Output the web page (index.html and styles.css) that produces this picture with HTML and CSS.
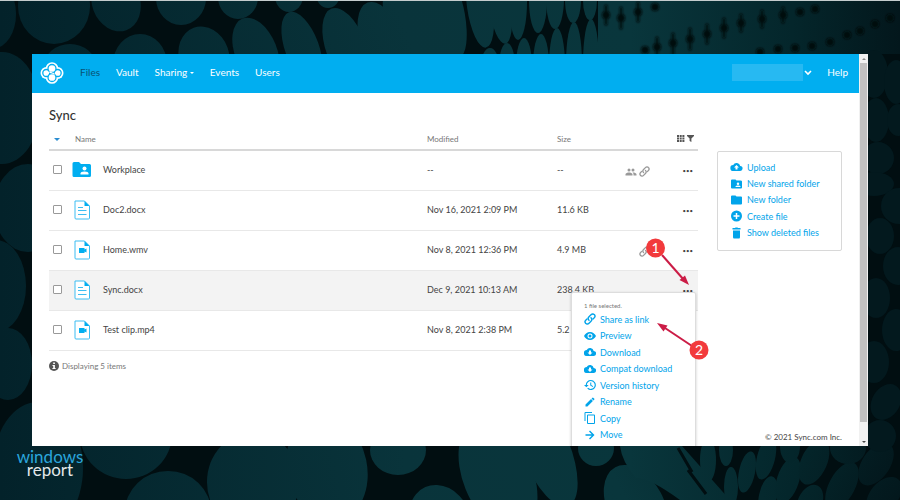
FILE: index.html
```html
<!DOCTYPE html>
<html lang="en">
<head>
	<meta charset="utf-8">
	<title>Files - Sync</title>
	<link rel="stylesheet" href="styles.css">
</head>

<body>
	<svg class="backdrop" viewBox="0 0 900 500" preserveAspectRatio="xMidYMid slice" aria-hidden="true">
		<defs>
			<linearGradient id="teal" gradientUnits="userSpaceOnUse" x1="0" y1="0" x2="900" y2="0">
				<stop offset="0" stop-color="#03222a"/>
				<stop offset=".45" stop-color="#09343b"/>
				<stop offset=".7" stop-color="#09363c"/>
				<stop offset=".88" stop-color="#04262b"/>
				<stop offset="1" stop-color="#03171c"/>
			</linearGradient>
			<filter id="soft"><feGaussianBlur stdDeviation="1.2"/></filter>
		</defs>
		<rect width="900" height="500" fill="#010e11"/>
		<g fill="url(#teal)">
			<!-- top -->
			<ellipse cx="-6" cy="14" rx="22" ry="34"/>
			<ellipse cx="54" cy="6" rx="36" ry="38"/>
			<ellipse cx="70" cy="66" rx="26" ry="22"/>
			<ellipse cx="116" cy="2" rx="24" ry="30" transform="rotate(-20 116 2)"/>
			<ellipse cx="140" cy="64" rx="27" ry="30"/>
			<ellipse cx="181" cy="-2" rx="25" ry="27"/>
			<ellipse cx="204" cy="56" rx="25" ry="30" transform="rotate(-20 204 56)"/>
			<ellipse cx="238" cy="-3" rx="20" ry="22"/>
			<ellipse cx="256" cy="52" rx="21" ry="36" transform="rotate(-22 256 52)"/>
			<ellipse cx="289" cy="-4" rx="14" ry="16"/>
			<ellipse cx="302" cy="48" rx="17" ry="38" transform="rotate(-20 302 48)"/>
			<ellipse cx="328" cy="-6" rx="12" ry="14"/>
			<ellipse cx="346" cy="48" rx="20" ry="42" transform="rotate(-20 346 48)"/>
			<ellipse cx="382" cy="42" rx="21" ry="42" transform="rotate(-20 382 42)"/>
			<ellipse cx="408" cy="26" rx="21" ry="46" transform="rotate(-20 408 26)"/>
			<ellipse cx="435" cy="20" rx="19" ry="48" transform="rotate(-20 435 20)"/>
			<ellipse cx="452" cy="16" rx="13" ry="42" transform="rotate(-10 452 16)"/>
			<ellipse cx="480" cy="6" rx="13" ry="42" transform="rotate(-8 480 6)"/>
			<ellipse cx="500" cy="6" rx="11" ry="38" transform="rotate(-8 500 6)"/>
			<ellipse cx="518" cy="2" rx="9" ry="38"/>
			<ellipse cx="538" cy="0" rx="9" ry="33"/>
			<ellipse cx="555" cy="-2" rx="9" ry="31"/>
			<ellipse cx="573" cy="0" rx="8" ry="23"/>
			<ellipse cx="590" cy="0" rx="7" ry="20"/>
			<ellipse cx="490" cy="66" rx="9" ry="18"/>
			<ellipse cx="507" cy="66" rx="8" ry="23"/>
			<ellipse cx="524" cy="66" rx="8" ry="28"/>
			<ellipse cx="541" cy="66" rx="8" ry="32"/>
			<ellipse cx="557" cy="66" rx="8" ry="38"/>
			<ellipse cx="574" cy="64" rx="8" ry="42"/>
			<ellipse cx="591" cy="64" rx="8" ry="45"/>
			<path d="M598 0H900V54H598Z"/>
			<!-- left edge -->
			<ellipse cx="2" cy="108" rx="38" ry="56"/>
			<ellipse cx="28" cy="208" rx="34" ry="44"/>
			<ellipse cx="-4" cy="286" rx="30" ry="46"/>
			<ellipse cx="8" cy="364" rx="24" ry="36"/>
			<ellipse cx="38" cy="468" rx="45" ry="66"/>
			<!-- bottom -->
			<ellipse cx="126" cy="434" rx="46" ry="45"/>
			<ellipse cx="168" cy="512" rx="43" ry="41"/>
			<ellipse cx="253" cy="482" rx="46" ry="50"/>
			<ellipse cx="327" cy="468" rx="40" ry="54" transform="rotate(-12 327 468)"/>
			<ellipse cx="398" cy="450" rx="28" ry="25"/>
			<ellipse cx="440" cy="520" rx="30" ry="36" transform="rotate(-24 440 520)"/>
			<ellipse cx="498" cy="476" rx="35" ry="60" transform="rotate(-22 498 476)"/>
			<ellipse cx="546" cy="450" rx="24" ry="60" transform="rotate(-22 546 450)"/>
			<ellipse cx="596" cy="448" rx="18" ry="18"/>
			<ellipse cx="600" cy="522" rx="18" ry="16"/>
			<ellipse cx="636" cy="506" rx="28" ry="44" transform="rotate(-28 636 506)"/>
			<path d="M620 446H682L730 500H680Q650 478 636 478Q622 462 620 446Z"/>
			<!-- bottom right -->
			<ellipse cx="708" cy="460" rx="8" ry="22"/>
			<ellipse cx="726" cy="450" rx="7" ry="16"/>
			<ellipse cx="731" cy="487" rx="7" ry="20"/>
			<ellipse cx="747" cy="472" rx="8" ry="21" transform="rotate(12 747 472)"/>
			<ellipse cx="766" cy="458" rx="9" ry="22" transform="rotate(14 766 458)"/>
			<ellipse cx="768" cy="496" rx="9" ry="20" transform="rotate(12 768 496)"/>
			<ellipse cx="788" cy="480" rx="11" ry="24" transform="rotate(18 788 480)"/>
			<ellipse cx="790" cy="446" rx="10" ry="17"/>
			<ellipse cx="814" cy="462" rx="13" ry="24" transform="rotate(24 814 462)"/>
			<ellipse cx="810" cy="502" rx="12" ry="18" transform="rotate(24 810 502)"/>
			<ellipse cx="842" cy="486" rx="13" ry="26" transform="rotate(28 842 486)"/>
			<ellipse cx="848" cy="448" rx="18" ry="16"/>
			<ellipse cx="876" cy="464" rx="14" ry="24" transform="rotate(34 876 464)"/>
			<ellipse cx="884" cy="496" rx="14" ry="22" transform="rotate(40 884 496)"/>
		</g>
		<!-- right edge -->
		<g fill="#03191e">
			<ellipse cx="874" cy="74" rx="14" ry="24"/>
			<ellipse cx="896" cy="82" rx="12" ry="22"/>
			<ellipse cx="876" cy="120" rx="13" ry="22"/>
			<ellipse cx="898" cy="120" rx="11" ry="16"/>
			<ellipse cx="878" cy="158" rx="16" ry="16"/>
			<ellipse cx="874" cy="184" rx="20" ry="12"/>
			<ellipse cx="899" cy="206" rx="18" ry="18"/>
			<ellipse cx="880" cy="236" rx="14" ry="18"/>
			<ellipse cx="898" cy="266" rx="15" ry="19"/>
			<ellipse cx="876" cy="298" rx="14" ry="20"/>
			<ellipse cx="896" cy="330" rx="14" ry="21"/>
			<ellipse cx="874" cy="362" rx="15" ry="21"/>
			<ellipse cx="886" cy="402" rx="14" ry="19" transform="rotate(30 886 402)"/>
			<ellipse cx="880" cy="436" rx="16" ry="16"/>
		</g>
		<!-- gaps between the packed shapes -->
		<g fill="none" stroke="#010e11" stroke-linecap="round" filter="url(#soft)">
			<path d="M606 15h.1M621 18h.1M638 12h.1M655 7h.1M645 50h.1M657 47h.1M673 43h.1M690 39h.1M707 34h.1M724 28h.1M741 23h.1M762 19h.1M783 15h.1M800 12h.1M815 9h.1" stroke-width="8"/>
			<path d="M606 6v18M621 8v20M638 3v18M657 38v16M673 34v20M690 29v20M707 25v18M724 19v18M741 15v16M762 11v16M783 8v14" stroke-width="3"/>
			<path d="M760 52h.1M778 49h.1M795 48h.1M812 46h.1M830 42h.1M847 35h.1M860 31h.1M875 24h.1M890 18h.1" stroke-width="8"/>
		</g>
		<path d="M678 448l14 24M688 470l18 24" stroke="#010e11" stroke-width="3" fill="none"/>
	</svg>

	<div class="window">
		<div class="app">
			<header class="topbar">
				<a href="#" class="logo" aria-label="Sync home">
					<svg width="24" height="22" viewBox="0 0 24 22">
						<g fill="#fff">
							<circle cx="12" cy="6.500" r="6.300"/>
							<circle cx="6.400" cy="11" r="5.900"/>
							<circle cx="17.600" cy="11" r="5.900"/>
							<circle cx="12" cy="15.500" r="6.300"/>
						</g>
						<g fill="#fff" stroke="#01aef0" stroke-width="1.300">
							<circle cx="6.300" cy="11" r="3.500"/>
							<circle cx="17.700" cy="11" r="3.500"/>
							<circle cx="12" cy="6.500" r="4"/>
							<circle cx="12" cy="15.500" r="4"/>
						</g>
						<path d="M9.500 9.600c1 1.600 4 1.200 5 2.800" fill="none" stroke="#fff" stroke-width="1.300"/>
					</svg>
				</a>
				<nav class="nav">
					<a href="#" class="nav-link active">Files</a>
					<a href="#" class="nav-link">Vault</a>
					<a href="#" class="nav-link">Sharing <span class="caret"></span></a>
					<a href="#" class="nav-link">Events</a>
					<a href="#" class="nav-link">Users</a>
				</nav>
				<button type="button" class="account" aria-label="Account">
					<span class="account-name"></span>
					<svg width="8" height="6" viewBox="0 0 8 6"><path d="M1 1 4 4 7 1" fill="none" stroke="#fff" stroke-width="1.600"/></svg>
				</button>
				<a href="#" class="nav-link">Help</a>
			</header>

			<main class="main">
				<section class="files">
					<h1 class="title">Sync</h1>
					<table class="list">
						<colgroup>
							<col class="w-check">
							<col class="w-icon">
							<col>
							<col class="w-modified">
							<col class="w-size">
							<col class="w-share">
							<col class="w-more">
						</colgroup>
						<thead>
							<tr>
								<th class="col-check"><button type="button" class="sort" aria-label="Sort"><span class="caret caret-blue"></span></button></th>
								<th class="col-name" colspan="2">Name</th>
								<th class="col-modified">Modified</th>
								<th class="col-size">Size</th>
								<th class="col-tools" colspan="2">
									<div class="tools">
										<button type="button" aria-label="Grid view">
											<svg width="8" height="7" viewBox="0 0 8 7"><path d="M0 0h2v2H0zM2.700 0h2v2h-2zM5.400 0h2v2h-2zM0 2.500h2v2H0zM2.700 2.500h2v2h-2zM5.400 2.500h2v2h-2zM0 5h2v2H0zM2.700 5h2v2h-2zM5.400 5h2v2h-2z" fill="#555"/></svg>
										</button>
										<button type="button" aria-label="Filter">
											<svg width="7" height="7" viewBox="0 0 7 7"><path d="M0 0h7v1L4.400 3.500V7L2.600 6V3.500L0 1z" fill="#555"/></svg>
										</button>
									</div>
								</th>
							</tr>
						</thead>
						<tbody>
							<tr>
								<td class="col-check"><input type="checkbox" class="check" aria-label="Select Workplace"></td>
								<td class="col-icon"><svg width="20" height="16" viewBox="0 0 20 16"><path d="M2 0h5l2 2h8.500Q19 2 19 3.500v10q0 1.500-1.500 1.500H2Q.500 15 .500 13.500v-12Q.500 0 2 0z" fill="#01aef0"/><circle cx="12.500" cy="6.500" r="2" fill="#fff"/><path d="M8.500 12.500v-1q0-2 4-2t4 2v1z" fill="#fff"/></svg></td>
								<td class="col-file">Workplace</td>
								<td class="col-modified">--</td>
								<td class="col-size">--</td>
								<td class="col-share">
									<div class="shares">
										<svg width="12" height="12" viewBox="0 0 24 24"><path d="M16 11a3 3 0 1 0 0-6 3 3 0 0 0 0 6zm-8 0a3 3 0 1 0 0-6 3 3 0 0 0 0 6zm0 2c-2.300 0-7 1.200-7 3.500V19h14v-2.500C15 14.200 10.300 13 8 13zm8 0c-.3 0-.6 0-1 .1 1.200.8 2 2 2 3.400V19h6v-2.500c0-2.300-4.700-3.500-7-3.500z" fill="#999"/></svg>
										<svg width="11" height="11" viewBox="0 0 24 24"><use href="#chain"/></svg>
									</div>
								</td>
								<td class="col-more"><button type="button" class="more" aria-label="More actions">•••</button></td>
							</tr>
							<tr>
								<td class="col-check"><input type="checkbox" class="check" aria-label="Select Doc2.docx"></td>
								<td class="col-icon"><svg width="20" height="20" viewBox="0 0 20 20"><use href="#doc"/></svg></td>
								<td class="col-file">Doc2.docx</td>
								<td class="col-modified">Nov 16, 2021 2:09 PM</td>
								<td class="col-size">11.6 KB</td>
								<td class="col-share"></td>
								<td class="col-more"><button type="button" class="more" aria-label="More actions">•••</button></td>
							</tr>
							<tr>
								<td class="col-check"><input type="checkbox" class="check" aria-label="Select Home.wmv"></td>
								<td class="col-icon"><svg width="20" height="20" viewBox="0 0 20 20"><use href="#video"/></svg></td>
								<td class="col-file">Home.wmv</td>
								<td class="col-modified">Nov 8, 2021 12:36 PM</td>
								<td class="col-size">4.9 MB</td>
								<td class="col-share"><div class="shares"><svg width="11" height="11" viewBox="0 0 24 24"><use href="#chain"/></svg></div></td>
								<td class="col-more"><button type="button" class="more" aria-label="More actions">•••</button></td>
							</tr>
							<tr class="selected">
								<td class="col-check"><input type="checkbox" class="check" aria-label="Select Sync.docx"></td>
								<td class="col-icon"><svg width="20" height="20" viewBox="0 0 20 20"><use href="#doc"/></svg></td>
								<td class="col-file">Sync.docx</td>
								<td class="col-modified">Dec 9, 2021 10:13 AM</td>
								<td class="col-size">238.4 KB</td>
								<td class="col-share"></td>
								<td class="col-more">
									<button type="button" class="more" aria-label="More actions">•••</button>
									<div class="menu">
										<p class="menu-title">1 file selected.</p>
										<ul class="actions menu-actions">
											<li><button type="button" class="action"><svg width="12" height="12" viewBox="0 0 24 24"><use href="#chain"/></svg>Share as link</button></li>
											<li><button type="button" class="action"><svg width="12" height="12" viewBox="0 0 24 24"><path d="M12 4C6.500 4 2 7.500 0 12c2 4.500 6.500 8 12 8s10-3.500 12-8c-2-4.500-6.500-8-12-8zm0 13a5 5 0 1 1 0-10 5 5 0 0 1 0 10zm0-8a3 3 0 1 0 0 6 3 3 0 0 0 0-6z"/></svg>Preview</button></li>
											<li><button type="button" class="action"><svg width="12" height="12" viewBox="0 0 24 24"><use href="#cloud-down"/></svg>Download</button></li>
											<li><button type="button" class="action"><svg width="12" height="12" viewBox="0 0 24 24"><use href="#cloud-down"/></svg>Compat download</button></li>
											<li><button type="button" class="action"><svg width="12" height="12" viewBox="0 0 24 24"><path d="M13.500 2A10 10 0 0 0 3.500 12H0l4.700 4.700L9.400 12H5.700a7.800 7.800 0 1 1 2.300 5.500L6.500 19A10 10 0 1 0 13.500 2zM12.500 7v6l5 3 1-1.500-4-2.400V7z"/></svg>Version history</button></li>
											<li><button type="button" class="action"><svg width="12" height="12" viewBox="0 0 24 24"><path d="M3 17.200V21h3.800L17.800 9.900l-3.700-3.700zM20.700 7a1 1 0 0 0 0-1.400l-2.300-2.300a1 1 0 0 0-1.400 0l-1.900 1.800 3.800 3.800z"/></svg>Rename</button></li>
											<li><button type="button" class="action"><svg width="12" height="12" viewBox="0 0 24 24"><path d="M16 0H3Q1 0 1 2v16h2V2h13zM20 5H8Q6 5 6 7v15q0 2 2 2h12q2 0 2-2V7q0-2-2-2zm0 17H8V7h12z"/></svg>Copy</button></li>
											<li><button type="button" class="action"><svg width="12" height="12" viewBox="0 0 24 24"><path d="M12 3l-2 2 5.500 5.500H3v3h12.500L10 19l2 2 9-9z"/></svg>Move</button></li>
										</ul>
									</div>
								</td>
							</tr>
							<tr>
								<td class="col-check"><input type="checkbox" class="check" aria-label="Select Test clip.mp4"></td>
								<td class="col-icon"><svg width="20" height="20" viewBox="0 0 20 20"><use href="#video"/></svg></td>
								<td class="col-file">Test clip.mp4</td>
								<td class="col-modified">Nov 8, 2021 2:38 PM</td>
								<td class="col-size">5.2 MB</td>
								<td class="col-share"></td>
								<td class="col-more"><button type="button" class="more" aria-label="More actions">•••</button></td>
							</tr>
						</tbody>
					</table>
					<p class="count">
						<svg width="10" height="10" viewBox="0 0 10 10"><circle cx="5" cy="5" r="5" fill="#555"/><path d="M4.200 1.600h1.700v1.500H4.200zM3.500 4h2.400v3h.7v1H3.400V7h.8V5h-.7z" fill="#fff"/></svg>
						Displaying 5 items
					</p>
				</section>

				<aside class="side">
					<ul class="actions panel">
						<li><button type="button" class="action"><svg width="13" height="12" viewBox="0 0 24 24"><path d="M19.400 10A7.500 7.500 0 0 0 5.400 8 6 6 0 0 0 6 20h13a5 5 0 0 0 .4-10zM14 13v4h-4v-4H7l5-5 5 5z"/></svg>Upload</button></li>
						<li><button type="button" class="action"><svg width="13" height="12" viewBox="0 0 24 24"><path d="M20 5h-8l-2-2H3Q1 3 1 5v14q0 2 2 2h18q2 0 2-2V7q0-2-3-2zm-5 4a2 2 0 1 1 0 5 2 2 0 0 1 0-5zm5 9H10v-1q0-2 5-2t5 2z"/></svg>New shared folder</button></li>
						<li><button type="button" class="action"><svg width="13" height="12" viewBox="0 0 24 24"><path d="M10 3H3Q1 3 1 5v14q0 2 2 2h18q2 0 2-2V7q0-2-2-2h-9z"/></svg>New folder</button></li>
						<li><button type="button" class="action"><svg width="13" height="12" viewBox="0 0 24 24"><path d="M12 1a11 11 0 1 0 0 22 11 11 0 0 0 0-22zm6 12.500h-4.500V18h-3v-4.500H6v-3h4.500V6h3v4.500H18z"/></svg>Create file</button></li>
						<li><button type="button" class="action"><svg width="13" height="12" viewBox="0 0 24 24"><path d="M5 7h14v13q0 3-2 3H7q-2 0-2-3zM4 2h5l1-1h4l1 1h5v3H4z"/></svg>Show deleted files</button></li>
					</ul>
					<p class="copyright">© 2021 Sync.com Inc.</p>
				</aside>
			</main>
		</div>

		<div class="scrollbar">
			<span class="scroll-arrow scroll-up"></span>
			<span class="scroll-thumb"></span>
			<span class="scroll-arrow scroll-down"></span>
		</div>
	</div>

	<div class="brand">
		<span class="brand-top">windows</span>
		<span class="brand-bottom">report</span>
	</div>

	<!-- numbered steps drawn over the window -->
	<svg class="steps" viewBox="0 0 900 500" aria-hidden="true">
		<g stroke="#cb1c46" stroke-width="2">
			<path d="M662 255 684 280"/>
			<path d="M692 346 665 328"/>
		</g>
		<g fill="#cb1c46">
			<path d="M689 285 679.500 280 685 275.500z"/>
			<path d="M657 323 667.500 325.500 663.500 331.500z"/>
		</g>
		<g fill="#f23a3c">
			<circle cx="655.500" cy="248" r="9.500"/>
			<circle cx="699" cy="350" r="9.500"/>
		</g>
		<g class="step-number">
			<text x="655.500" y="253">1</text>
			<text x="699" y="355">2</text>
		</g>
	</svg>

	<svg class="symbols" aria-hidden="true">
		<symbol id="chain" viewBox="0 0 24 24">
			<g fill="none" stroke="currentColor" stroke-width="2.800" stroke-linecap="round">
				<path d="M10 14.500c-2-2-2-5 0-7l4-4c2-2 5-2 6.500-.3 1.800 1.800 1.800 4.600 0 6.500L18 12.200"/>
				<path d="M14 9.500c2 2 2 5 0 7l-4 4c-2 2-5 2-6.500.3-1.800-1.800-1.800-4.600 0-6.500L6 11.800"/>
			</g>
		</symbol>
		<symbol id="cloud-down" viewBox="0 0 24 24">
			<path d="M19.400 10A7.500 7.500 0 0 0 5.400 8 6 6 0 0 0 6 20h13a5 5 0 0 0 .4-10zM17 13l-5 5-5-5h3V9h4v4z"/>
		</symbol>
		<symbol id="doc" viewBox="0 0 20 20">
			<path d="M3 1h9.500L17.500 6V18q0 1-1 1H4q-1 0-1-1z" fill="#fff" stroke="#3cbdf2"/>
			<path d="M12.500 1 17.500 6h-5z" fill="#01aef0"/>
			<path d="M6 7.500h5M6 10.500h8.500M6 14.500h8.500" stroke="#3cbdf2"/>
		</symbol>
		<symbol id="video" viewBox="0 0 20 20">
			<path d="M3 1h9.500L17.500 6V18q0 1-1 1H4q-1 0-1-1z" fill="#fff" stroke="#3cbdf2"/>
			<path d="M12.500 1 17.500 6h-5z" fill="#01aef0"/>
			<path d="M7 8h5.500v1.500L14.500 8.500v4l-2-1V13H7z" fill="#01aef0"/>
		</symbol>
	</svg>
</body>

</html>
```

FILE: styles.css
```css
*{
	box-sizing: border-box;
}

body{
	margin: 0;
	height: 100vh;
	padding: 53px 32px 0 32px;
	display: flex;
	flex-direction: column;
	overflow: hidden;
	border-top: 1px solid #c4cccd;
	background-color: #010e11;
	font-family: Lato, sans-serif;
	font-size: 9px;
	color: #444;
}

h1, p, ul{
	margin: 0;
	padding: 0;
}

button{
	border: 0;
	padding: 0;
	background: none;
	font: inherit;
	color: inherit;
	cursor: pointer;
}

a{
	color: inherit;
	text-decoration: none;
}

svg{
	display: block;
	flex-shrink: 0;
}

.backdrop, .steps{
	position: absolute;
	top: 0;
	left: 0;
	width: 100%;
	height: 100%;
}

.backdrop{
	z-index: -1;
}

.steps{
	z-index: 5;
	pointer-events: none;
}

.step-number{
	fill: #fff;
	font-size: 14px;
	text-anchor: middle;
}

.symbols{
	position: absolute;
	width: 0;
	height: 0;
}

/* window */

.window{
	flex: 1;
	min-height: 0;
	display: flex;
	overflow: hidden;
	background-color: #fff;
}

.app{
	flex: 1;
	display: flex;
	flex-direction: column;
}

.topbar{
	height: 39px;
	padding: 0 11px 2px 8px;
	display: flex;
	align-items: center;
	background-color: #01aef0;
	font-size: 10px;
	line-height: 16px;
	color: #fff;
}

.nav{
	flex: 1;
	display: flex;
	gap: 16px;
	margin-left: 16px;
}

.nav-link{
	padding-bottom: 2px;
}

.nav-link.active{
	color: #0a5273;
}

.caret{
	display: inline-block;
	border: 2px solid transparent;
	border-top-color: currentColor;
	border-bottom: 0;
	vertical-align: middle;
}

.caret-blue{
	border-width: 3px;
	border-bottom: 0;
	color: #2a8cd0;
}

.account{
	display: flex;
	align-items: center;
	gap: 1px;
	margin-right: 15px;
}

.account-name{
	width: 71px;
	height: 17px;
	background-color: #27b9f2;
}

/* file list */

.main{
	flex: 1;
	min-height: 0;
	display: flex;
	gap: 19px;
	padding: 0 17px;
}

.files{
	flex: 1;
}

.title{
	padding-top: 14px;
	font-size: 13px;
	line-height: 16px;
	font-weight: 500;
	color: #333;
}

.list{
	width: 100%;
	table-layout: fixed;
	border-collapse: separate;
	border-spacing: 0;
}

.list th, .list td{
	padding: 0;
	text-align: left;
}

.list th{
	height: 28px;
	padding-top: 5px;
	border-bottom: 2px solid #d8d8d8;
	font-size: 8px;
	font-weight: 400;
	color: #777;
}

.list td{
	height: 40px;
	padding-bottom: 2px;
	border-bottom: 1px solid #e8e8e8;
}

.w-check{
	width: 26px;
}

.w-icon{
	width: 28px;
}

.w-modified{
	width: 130px;
}

.w-size{
	width: 68px;
}

.w-share{
	width: 40px;
}

.w-more{
	width: 33px;
}

.list .col-check{
	padding-left: 4px;
}

.col-icon svg{
	margin-left: -3px;
}

.sort{
	display: block;
	padding-left: 1px;
}

.tools{
	display: flex;
	justify-content: flex-end;
	gap: 2px;
	padding-right: 4px;
}

.check{
	appearance: none;
	display: block;
	width: 9px;
	height: 9px;
	margin: 0;
	border: 1px solid #999;
	border-radius: 1px;
	background-color: #fff;
}

.selected td{
	background-color: #f3f3f3;
}

.shares{
	display: flex;
	justify-content: flex-end;
	align-items: center;
	gap: 2px;
	padding: 4px 15px 0 0;
	color: #999;
}

.list .col-more{
	position: relative;
	text-align: right;
}

.more{
	padding-right: 5px;
	font-size: 6px;
	color: #444;
}

.count{
	display: flex;
	align-items: center;
	gap: 3px;
	padding-top: 10px;
	font-size: 8px;
	color: #777;
}

/* actions */

.actions{
	display: grid;
	grid-auto-rows: 1fr;
	list-style: none;
	color: #01a4ea;
}

.actions li{
	display: flex;
	align-items: center;
}

.action{
	display: flex;
	align-items: center;
	gap: 4px;
	white-space: nowrap;
}

.action svg{
	fill: currentColor;
}

.menu{
	position: absolute;
	top: 21px;
	right: 2px;
	z-index: 2;
	width: 125px;
	height: 190px;
	padding: 8px 12px;
	border: 1px solid #ddd;
	border-radius: 2px;
	background-color: #fff;
	box-shadow: 0 1px 3px rgba(0, 0, 0, .2);
	text-align: left;
}

.menu-title{
	font-size: 6px;
	line-height: 10px;
	color: #777;
}

.menu-actions{
	height: 132px;
}

.side{
	width: 125px;
	display: flex;
	flex-direction: column;
	justify-content: space-between;
	padding: 58px 0 4px;
}

.panel{
	height: 100px;
	padding: 7px 12px 9px;
	border: 1px solid #d8d8d8;
	border-radius: 2px;
}

.copyright{
	font-size: 8px;
	text-align: right;
}

/* window scrollbar */

.scrollbar{
	width: 9px;
	display: flex;
	flex-direction: column;
	align-items: center;
	background-color: #f1f1f1;
}

.scroll-thumb{
	flex: 1;
	width: 7px;
	margin-bottom: 19px;
	background-color: #c1c1c1;
}

.scroll-arrow{
	width: 4px;
	height: 2px;
	border: 2px solid transparent;
}

.scroll-up{
	margin: 4px 0 3px;
	border-top: 0;
	border-bottom-color: #888;
}

.scroll-down{
	margin-bottom: 3px;
	border-bottom: 0;
	border-top-color: #444;
}

.brand{
	height: 54px;
	width: 68px;
	margin-left: -16px;
	padding-top: 4px;
	display: flex;
	flex-direction: column;
	align-items: center;
	font-size: 17px;
	line-height: 13px;
}

.brand-top{
	color: #2ba6dc;
}

.brand-bottom{
	color: #e3e8ea;
}
```
